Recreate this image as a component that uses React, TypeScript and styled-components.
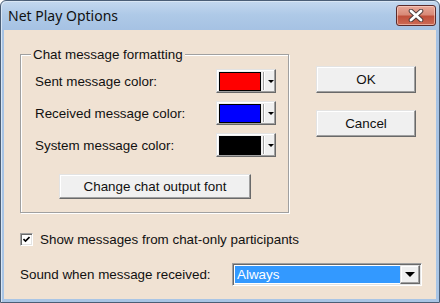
import React from 'react'
import styled, { createGlobalStyle } from 'styled-components'

const GlobalStyle = createGlobalStyle`
html, body {
    margin: 0;
    width: 440px;
    height: 303px;
    overflow: hidden;
    font-family: 'Liberation Sans', Arial, sans-serif;
}
`

const Window = styled.div`
width: 440px;
height: 303px;
box-sizing: border-box;
display: flex;
flex-direction: column;
border: 1px solid #4b5e76;
border-radius: 6px 6px 0 0;
padding: 0 3px 3px 3px;
background: linear-gradient(#c4d8ee 0px, #aec9e7 14px, #a6c2e3 29px, #a9c5e5 100%);
box-shadow: inset 1px 1px 0 #d9e6f4;
`

const TitleBar = styled.div`
height: 29px;
flex: none;
display: flex;
align-items: center;
justify-content: space-between;
padding-left: 4px;
`

const Title = styled.span`
font-family: 'Noto Sans', 'Open Sans', sans-serif;
font-size: 14px;
color: #111;
`

const CloseButton = styled.div`
width: 38px;
height: 19px;
border: 1px solid #5b2b2b;
border-radius: 3px;
display: flex;
align-items: center;
justify-content: center;
background: linear-gradient(#e9a899 0%, #d88a78 45%, #c0503b 55%, #cc6a55 100%);
box-shadow: inset 0 0 0 1px rgba(255, 220, 210, 0.55);
`

const Client = styled.div`
flex: 1;
display: flex;
flex-direction: column;
background: #f0e2d3;
padding: 17px 0 0 16px;
font-size: 13.4px;
color: #111;
`

const TopRow = styled.div`
display: flex;
align-items: flex-start;
`

const GroupBox = styled.fieldset`
width: 269px;
box-sizing: border-box;
margin: 0;
padding: 0;
border: 1px solid #a0a0a0;
box-shadow: inset 1px 1px 0 #fff, 1px 1px 0 #fff;
`

const Legend = styled.legend`
margin-left: 10px;
padding: 0 2px;
line-height: 15px;
background: #f0e2d3;
`

const GroupBody = styled.div`
display: flex;
flex-direction: column;
padding: 7px 12px 13px 14px;
`

const ColorRow = styled.div`
display: flex;
align-items: center;
justify-content: space-between;
height: 24px;
margin-bottom: 8px;
`

const RaisedButton = styled.div`
box-sizing: border-box;
display: flex;
align-items: center;
justify-content: center;
background: #f0f0f0;
border: 1px solid;
border-color: #e3e3e3 #696969 #696969 #e3e3e3;
box-shadow: inset -1px -1px 0 #a0a0a0, inset 1px 1px 0 #fff;
`

const SwatchButton = styled(RaisedButton)`
width: 60px;
height: 24px;
justify-content: flex-start;
padding: 0 0 0 2px;
`

const ColorBox = styled.div<{ $color: string }>`
width: 40px;
height: 17px;
border: 1px solid #000;
background: ${p => p.$color};
`

const Separator = styled.div`
width: 1px;
height: 18px;
margin-left: 2px;
background: #a0a0a0;
border-right: 1px solid #fff;
`

const SmallArrow = styled.div`
margin-left: 3px;
width: 0;
height: 0;
border-left: 3px solid transparent;
border-right: 3px solid transparent;
border-top: 3px solid #000;
`

const FontButton = styled(RaisedButton)`
width: 192px;
height: 25px;
margin: 9px 0 0 24px;
`

const ButtonColumn = styled.div`
display: flex;
flex-direction: column;
gap: 17px;
margin: 19px 0 0 27px;
`

const DialogButton = styled(RaisedButton)`
width: 100px;
height: 27px;
`

const CheckRow = styled.label`
display: flex;
align-items: center;
gap: 7px;
margin-top: 19px;
height: 15px;
`

const CheckBox = styled.div`
width: 13px;
height: 13px;
box-sizing: border-box;
display: flex;
align-items: center;
justify-content: center;
background: #fff;
border: 1px solid;
border-color: #a0a0a0 #fff #fff #a0a0a0;
box-shadow: inset 1px 1px 0 #696969, inset -1px -1px 0 #e3e3e3;
`

const SoundRow = styled.div`
display: flex;
align-items: center;
margin-top: 16px;
`

const SoundLabel = styled.span`
width: 212px;
`

const Combo = styled.div`
width: 190px;
height: 23px;
box-sizing: border-box;
display: flex;
align-items: stretch;
padding: 1px;
background: #fff;
border: 1px solid;
border-color: #a0a0a0 #fff #fff #a0a0a0;
box-shadow: inset 1px 1px 0 #696969, inset -1px -1px 0 #e3e3e3;
`

const ComboValue = styled.div`
flex: 1;
display: flex;
align-items: center;
margin: 1px 0 1px 1px;
padding-left: 2px;
background: #3399ff;
color: #fff;
`

const ComboButton = styled(RaisedButton)`
width: 20px;
`

const BigArrow = styled.div`
width: 0;
height: 0;
border-left: 5px solid transparent;
border-right: 5px solid transparent;
border-top: 5px solid #000;
`

const colors = [
    { label: 'Sent message color:', color: '#ff0000' },
    { label: 'Received message color:', color: '#0000ff' },
    { label: 'System message color:', color: '#000000' },
]

const App = () => {
  return (
    <>
      <GlobalStyle />
      <Window>
        <TitleBar>
          <Title>Net Play Options</Title>
          <CloseButton>
            <svg width="16" height="13" viewBox="0 0 16 13">
              <path d="M3 2 L13 11 M13 2 L3 11" stroke="#4a3a3a" strokeWidth="4.6" strokeLinecap="round" />
              <path d="M3 2 L13 11 M13 2 L3 11" stroke="#fff" strokeWidth="2.8" strokeLinecap="round" />
            </svg>
          </CloseButton>
        </TitleBar>
        <Client>
          <TopRow>
            <GroupBox>
              <Legend>Chat message formatting</Legend>
              <GroupBody>
                {colors.map(c => (
                  <ColorRow key={c.label}>
                    <span>{c.label}</span>
                    <SwatchButton>
                      <ColorBox $color={c.color} />
                      <Separator />
                      <SmallArrow />
                    </SwatchButton>
                  </ColorRow>
                ))}
                <FontButton>Change chat output font</FontButton>
              </GroupBody>
            </GroupBox>
            <ButtonColumn>
              <DialogButton>OK</DialogButton>
              <DialogButton>Cancel</DialogButton>
            </ButtonColumn>
          </TopRow>
          <CheckRow>
            <CheckBox>
              <svg width="7" height="7" viewBox="0 0 7 7">
                <path d="M0.5 3 L2.5 5 L6.5 1" stroke="#000" strokeWidth="1.6" fill="none" />
              </svg>
            </CheckBox>
            <span>Show messages from chat-only participants</span>
          </CheckRow>
          <SoundRow>
            <SoundLabel>Sound when message received:</SoundLabel>
            <Combo>
              <ComboValue>Always</ComboValue>
              <ComboButton>
                <BigArrow />
              </ComboButton>
            </Combo>
          </SoundRow>
        </Client>
      </Window>
    </>
  )
}

export default App
